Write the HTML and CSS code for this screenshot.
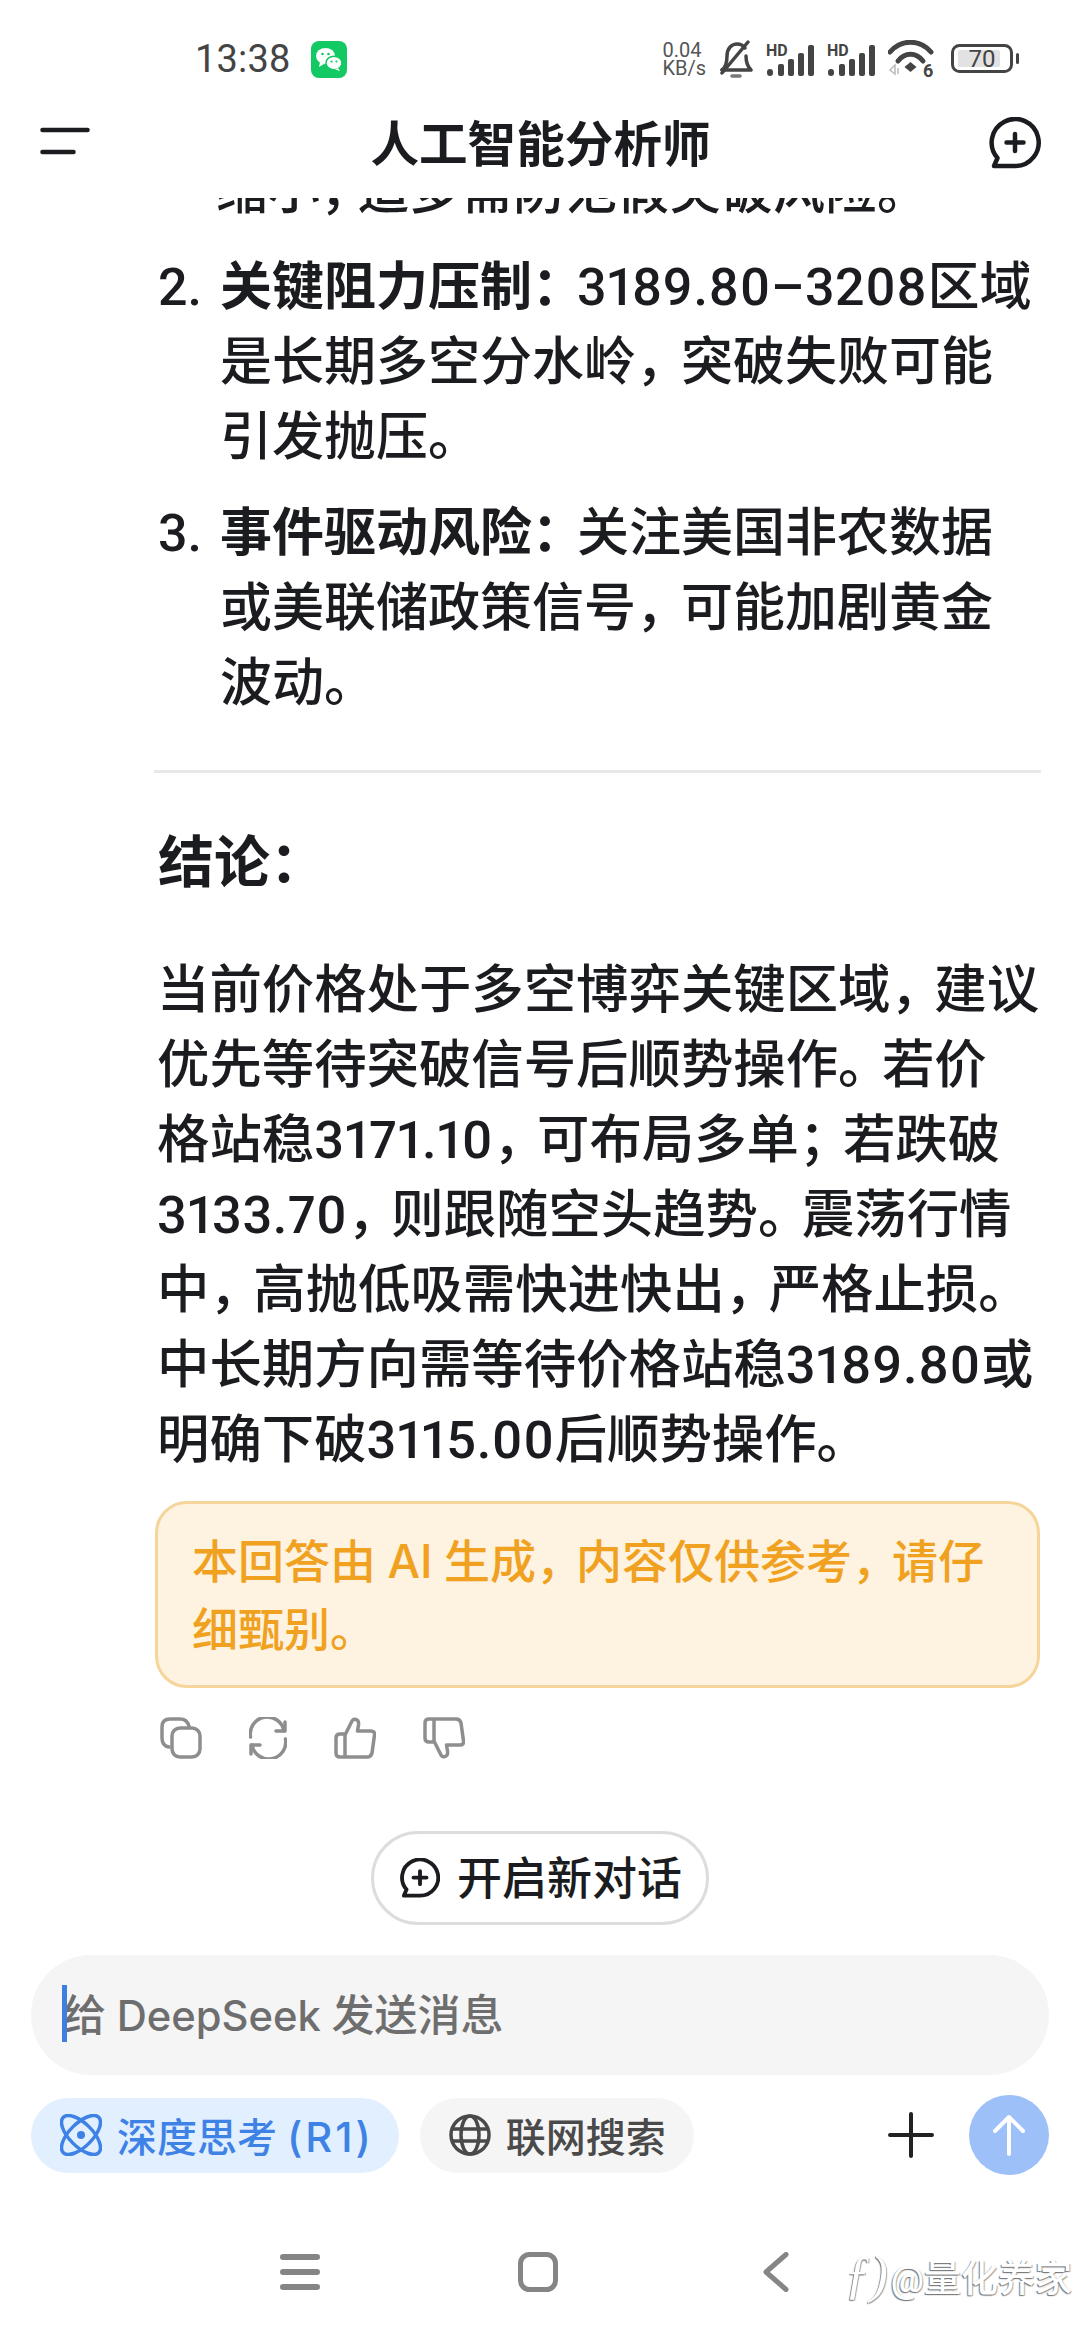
FILE: index.html
```html
<!DOCTYPE html>
<html lang="zh-CN">
<head>
    <meta charset="UTF-8">
    <meta name="viewport" content="width=device-width, initial-scale=1.0">
    <title>人工智能分析师</title>
    <link rel="stylesheet" href="styles.css">
</head>
<body>
    <div class="status">
        <span class="time">13:38</span>
        <svg class="wechat" width="36" height="37" viewBox="0 0 36 37">
            <rect width="36" height="37" rx="8" fill="#12c963"/>
            <ellipse cx="14.500" cy="15" rx="9.500" ry="8" fill="#fff"/>
            <path d="M9 21l-1 5 5-3z" fill="#fff"/>
            <ellipse cx="23" cy="22" rx="8" ry="6.800" fill="#fff" stroke="#12c963" stroke-width="1.500"/>
            <path d="M27 27l2 3-5-1.500z" fill="#fff"/>
            <circle cx="11.500" cy="13" r="1.300" fill="#12c963"/>
            <circle cx="17.500" cy="13" r="1.300" fill="#12c963"/>
            <circle cx="20.500" cy="20.500" r="1.100" fill="#12c963"/>
            <circle cx="25.500" cy="20.500" r="1.100" fill="#12c963"/>
        </svg>
        <div class="status-right">
            <div class="speed"><span>0.04</span><span>KB/s</span></div>
            <svg width="34" height="38" viewBox="0 0 34 38" fill="none" stroke="#444" stroke-width="3.500" stroke-linecap="round" stroke-linejoin="round">
                <path d="M3 30c4-3 5-7 5-14C8 8 13 4 18 4c3 0 6 1 8 4"/>
                <path d="M27 16c0 6 1 10 5 14H3"/>
                <path d="M29 2L3 33"/>
                <path d="M13 36h8" stroke="#777"/>
            </svg>
            <svg class="signal" width="48" height="36" viewBox="0 -4 48 36">
                <text class="hd" x="0" y="12">HD</text>
                <g fill="#444">
                    <rect x="1" y="25" width="6" height="7" rx="3"/>
                    <rect x="12" y="20" width="6" height="12" rx="2"/>
                    <rect x="22" y="15" width="6" height="17" rx="2"/>
                    <rect x="32" y="9" width="6" height="23" rx="2"/>
                    <rect x="42" y="1" width="6" height="31" rx="2"/>
                </g>
            </svg>
            <svg class="signal" width="48" height="36" viewBox="0 -4 48 36">
                <text class="hd" x="0" y="12">HD</text>
                <g fill="#444">
                    <rect x="1" y="25" width="6" height="7" rx="3"/>
                    <rect x="12" y="20" width="6" height="12" rx="2"/>
                    <rect x="22" y="15" width="6" height="17" rx="2"/>
                    <rect x="32" y="9" width="6" height="23" rx="2"/>
                    <rect x="42" y="1" width="6" height="31" rx="2"/>
                </g>
            </svg>
            <svg class="wifi" width="48" height="44" viewBox="0 0 48 44" fill="none">
                <path d="M2 12C13 -1 32 -1 43 12" stroke="#444" stroke-width="5" stroke-linecap="round"/>
                <path d="M10 21C17 12 28 12 35 21" stroke="#444" stroke-width="5" stroke-linecap="round"/>
                <path d="M22.500 22l6 5-6 5-6-5z" fill="#444"/>
                <path d="M7 25v9l-5-4zM10 28v6" stroke="#bbb" stroke-width="1.500"/>
                <text class="wifi-num" x="35" y="37">6</text>
            </svg>
            <svg class="battery" width="68" height="30" viewBox="0 0 68 30">
                <rect x="1.500" y="1.500" width="59" height="26" rx="7" fill="#fff" stroke="#444" stroke-width="3"/>
                <rect x="7" y="6" width="42" height="17" rx="2" fill="#e2e2e2"/>
                <text class="batt-num" x="31" y="23" text-anchor="middle">70</text>
                <rect x="65" y="9" width="3" height="11" rx="1.500" fill="#444"/>
            </svg>
        </div>
    </div>

    <div class="topbar">
        <svg class="menu" width="50" height="28" viewBox="0 0 50 28" fill="none" stroke="#1b1c20" stroke-width="4.500" stroke-linecap="round">
            <path d="M2.500 3h45"/>
            <path d="M2.500 25h31"/>
        </svg>
        <h1>人工智能分析师</h1>
        <svg class="add" width="52" height="52" viewBox="0 0 52 52" fill="none" stroke="#1b1c20" stroke-width="4.500" stroke-linecap="round" stroke-linejoin="round">
            <path d="M26 49H5l3.500-8A23.500 23.500 0 1 1 26 49z"/>
            <path d="M26 17v17M17.500 25.500h17"/>
        </svg>
    </div>

    <div class="chat">
        <div class="item item-cut">
            <span class="num"></span>
            <p>缩小<span class="pn-tight">，</span>追多需防范假突破风险<span class="pn">。</span></p>
        </div>
        <div class="item">
            <span class="num">2.</span>
            <p><b>关键阻力压制</b><b class="pn">：</b><span class="d">3189.80–3208</span>区域<br>是长期多空分水岭<span class="pn">，</span>突破失败可能<br>引发抛压<span class="pn">。</span></p>
        </div>
        <div class="item">
            <span class="num">3.</span>
            <p><b>事件驱动风险</b><b class="pn">：</b>关注美国非农数据<br>或美联储政策信号<span class="pn">，</span>可能加剧黄金<br>波动<span class="pn">。</span></p>
        </div>
        <hr>
        <h2>结论：</h2>
        <p class="answer">当前价格处于多空博弈关键区域<span class="pn">，</span>建议<br>优先等待突破信号后顺势操作<span class="pn">。</span>若价<br>格站稳<span class="d">3171.10</span><span class="pn">，</span>可布局多单<span class="pn">；</span>若跌破<br><span class="d">3133.70</span><span class="pn">，</span>则跟随空头趋势<span class="pn">。</span>震荡行情<br>中<span class="pn">，</span>高抛低吸需快进快出<span class="pn">，</span>严格止损<span class="pn">。</span><br>中长期方向需等待价格站稳<span class="d">3189.80</span>或<br>明确下破<span class="d">3115.00</span>后顺势操作<span class="pn">。</span></p>
        <div class="notice">本回答由 <span class="lat">AI</span> 生成<span class="pn">，</span>内容仅供参考<span class="pn">，</span>请仔<br>细甄别<span class="pn">。</span></div>

        <div class="actions">
            <svg width="42" height="42" viewBox="0 0 42 42">
                <path d="M9 30Q2 29 2 21V10Q2 2 10 2H20Q27 2 29 9"/>
                <rect x="12" y="11" width="28" height="29" rx="8"/>
            </svg>
            <svg width="38" height="42" viewBox="0 0 38 42">
                <path d="M1.500 20A17 17 0 0 1 35 14"/>
                <path d="M36 5v9h-9"/>
                <path d="M36.500 22A17 17 0 0 1 3 28"/>
                <path d="M2 37v-9h9"/>
            </svg>
            <svg width="42" height="42" viewBox="0 0 42 42">
                <path d="M11 18L18 4Q20 1 23 3Q25 4 24.500 8L23.500 14H37Q41 14 40.500 18L38 36Q37 40 33 40H6Q2 40 2 36V21Q2 17 6 17H11V40"/>
            </svg>
            <svg width="42" height="42" viewBox="0 0 42 42">
                <path transform="matrix(1 0 0 -1 0 42)" d="M11 18L18 4Q20 1 23 3Q25 4 24.500 8L23.500 14H37Q41 14 40.500 18L38 36Q37 40 33 40H6Q2 40 2 36V21Q2 17 6 17H11V40"/>
            </svg>
        </div>

        <div class="new-chat">
            <svg width="40" height="40" viewBox="0 0 52 52" fill="none" stroke="#1b1c20" stroke-width="5" stroke-linecap="round" stroke-linejoin="round">
                <path d="M26 49H5l3.500-8A23.500 23.500 0 1 1 26 49z"/>
                <path d="M26 17v17M17.500 25.500h17"/>
            </svg>
            <span>开启新对话</span>
        </div>
    </div>

    <div class="composer">
        <div class="input">
            <span class="caret"></span>
            <span class="hint">给 <span class="lat">DeepSeek</span> 发送消息</span>
        </div>
        <div class="tools">
            <div class="chip chip-on">
                <svg width="42" height="42" viewBox="0 0 42 42" fill="none" stroke="#3f82e6" stroke-width="3.500">
                    <ellipse cx="21" cy="21" rx="25" ry="11.500" transform="rotate(45 21 21)"/>
                    <ellipse cx="21" cy="21" rx="25" ry="11.500" transform="rotate(-45 21 21)"/>
                    <circle cx="21" cy="21" r="4" fill="#3f82e6" stroke="none"/>
                </svg>
                <span>深度思考 <span class="lat">(R1)</span></span>
            </div>
            <div class="chip">
                <svg width="42" height="42" viewBox="0 0 42 42" fill="none" stroke="#4a4a4a" stroke-width="3.500">
                    <circle cx="21" cy="21" r="19"/>
                    <ellipse cx="21" cy="21" rx="9" ry="19"/>
                    <path d="M3 15h36M3 27h36"/>
                </svg>
                <span>联网搜索</span>
            </div>
            <svg class="plus" width="46" height="46" viewBox="0 0 46 46" fill="none" stroke="#222" stroke-width="4" stroke-linecap="round">
                <path d="M23 2v42M2 23h42"/>
            </svg>
            <div class="send">
                <svg width="34" height="42" viewBox="0 0 34 42" fill="none" stroke="#fff" stroke-width="4" stroke-linecap="round" stroke-linejoin="round">
                    <path d="M17 40V3M3 17L17 3l14 14"/>
                </svg>
            </div>
        </div>
    </div>

    <div class="nav">
        <svg width="40" height="40" viewBox="0 0 40 40" fill="none" stroke="#858585" stroke-width="6" stroke-linecap="round">
            <path d="M3 5h34M3 20h34M3 35h34"/>
        </svg>
        <svg width="40" height="40" viewBox="0 0 40 40" fill="none" stroke="#858585" stroke-width="5">
            <rect x="2.500" y="2.500" width="35" height="35" rx="9"/>
        </svg>
        <svg width="26" height="40" viewBox="0 0 26 40" fill="none" stroke="#858585" stroke-width="5" stroke-linecap="round" stroke-linejoin="round">
            <path d="M23 2.500L3 20l20 17.500"/>
        </svg>
    </div>
    <div class="watermark"><i>ƒ)</i>@量化养家</div>
</body>
</html>
```

FILE: styles.css
```css
* {
    box-sizing: border-box;
}
html, body {
    margin: 0;
    height: 2340px;
    background: #fff;
}
body {
    position: relative;
    display: flex;
    flex-direction: column;
    overflow: hidden;
    font-family: Roboto, "Noto Sans CJK SC", sans-serif;
    font-weight: 500;
    color: #1b1c20;
}

/* status bar */
.status {
    display: flex;
    align-items: center;
    height: 78px;
    padding: 40px 61px 0 195px;
    color: #444;
    font-weight: 400;
}
.time {
    font-size: 38px;
    letter-spacing: 0.2px;
}
.wechat {
    margin-left: 20px;
}
.status-right {
    display: flex;
    align-items: center;
    gap: 13px;
    margin-left: auto;
}
.speed {
    display: flex;
    flex-direction: column;
    font-size: 20px;
    line-height: 18px;
    color: #555;
}
.signal {
    margin-top: -2px;
}
.wifi {
    margin-top: 6px;
}
.battery {
    margin-left: 2px;
}
.hd {
    font: 700 16px Roboto, sans-serif;
    fill: #444;
}
.wifi-num {
    font: 700 18px Roboto, sans-serif;
    fill: #444;
}
.batt-num {
    font: 400 24px Roboto, sans-serif;
    fill: #444;
}

/* header */
.topbar {
    display: flex;
    align-items: center;
    justify-content: space-between;
    height: 120px;
    padding: 6px 39px 0 40px;
}
.add {
    margin-top: 4px;
}
h1 {
    margin: 0 0 0 2px;
    font-size: 48.600px;
    font-weight: 700;
}

/* answer */
.chat {
    height: 1757px;
    overflow: hidden;
}
.item {
    display: flex;
    margin: 21px 0 0 158px;
    font-size: 52px;
    line-height: 75px;
    white-space: nowrap;
}
.item-cut {
    margin-top: -44px;
}
.num {
    width: 62px;
}
.item p {
    margin: 0;
}
.item-cut p {
    margin-left: -4px;
}
.pn {
    letter-spacing: -7px;
}
.pn-tight {
    letter-spacing: -15px;
}
.d {
    font-variant-numeric: proportional-nums;
    letter-spacing: 0.600px;
}
.lat {
    font-family: Inter, sans-serif;
}
hr {
    height: 3px;
    margin: 49px 39px 0 154px;
    border: 0;
    background: #e8e8e8;
}
h2 {
    margin: 53px 0 0 158px;
    font-size: 56px;
    line-height: 75px;
    font-weight: 700;
}
.answer {
    margin: 52px 0 0 157px;
    font-size: 52.400px;
    line-height: 75px;
    white-space: nowrap;
}
.answer .pn {
    letter-spacing: -8.500px;
}
.notice {
    height: 187px;
    margin: 23px 40px 0 155px;
    padding: 23px 34px;
    border: 3px solid #f5d59b;
    border-radius: 32px;
    background: #fef3e0;
    color: #f0a11f;
    font-size: 46px;
    line-height: 68px;
    white-space: nowrap;
}
.notice .pn {
    letter-spacing: -6px;
}
.actions {
    display: flex;
    align-items: center;
    gap: 47px;
    margin: 29px 0 0 160px;
}
.actions svg {
    fill: none;
    stroke: #8e8e8e;
    stroke-width: 3.5;
    stroke-linecap: round;
    stroke-linejoin: round;
}
.new-chat {
    display: flex;
    align-items: center;
    gap: 17px;
    width: 338px;
    height: 94px;
    margin: 72px 0 0 371px;
    padding-left: 26px;
    border: 3px solid #ddd;
    border-radius: 47px;
    font-size: 45px;
}
.new-chat span {
    margin-top: -5px;
}

/* input area */
.composer {
    padding: 0 31px;
}
.input {
    position: relative;
    display: flex;
    align-items: center;
    height: 120px;
    padding-left: 32px;
    border-radius: 60px;
    background: #f5f5f5;
    color: #6e6e6e;
    font-size: 43px;
}
.hint {
    margin-top: -6px;
}
.hint .lat {
    font-size: 0.970em;
}
.caret {
    position: absolute;
    left: 31px;
    top: 30px;
    width: 5px;
    height: 57px;
    background: #3f7fe0;
}
.tools {
    display: flex;
    align-items: center;
    gap: 21px;
    margin-top: 20px;
}
.chip {
    display: flex;
    align-items: center;
    gap: 15px;
    height: 75px;
    padding: 0 28px 0 29px;
    border-radius: 38px;
    background: #f5f5f5;
    color: #4a4a4a;
    font-size: 40px;
}
.chip .lat {
    font-size: 1.040em;
    letter-spacing: 3px;
}
.chip-on {
    padding-right: 25px;
    background: #e1efff;
    color: #3f82e6;
}
.plus {
    margin-left: auto;
    margin-right: 14px;
}
.send {
    display: flex;
    align-items: center;
    justify-content: center;
    width: 80px;
    height: 80px;
    border-radius: 50%;
    background: #9cc0f7;
}

/* system nav */
.nav {
    display: grid;
    grid-template-columns: repeat(3, 238px);
    justify-content: center;
    justify-items: center;
    margin-top: 77px;
    padding-right: 5px;
}
.watermark {
    position: absolute;
    right: 8px;
    bottom: 38px;
    color: #fff;
    font-size: 37px;
    line-height: 44px;
    text-shadow: -1px 1px 1px #777, 1px 1px 1px #aaa;
}
.watermark i {
    margin-right: 3px;
    font-family: "Liberation Serif", serif;
    font-size: 52px;
}
```
